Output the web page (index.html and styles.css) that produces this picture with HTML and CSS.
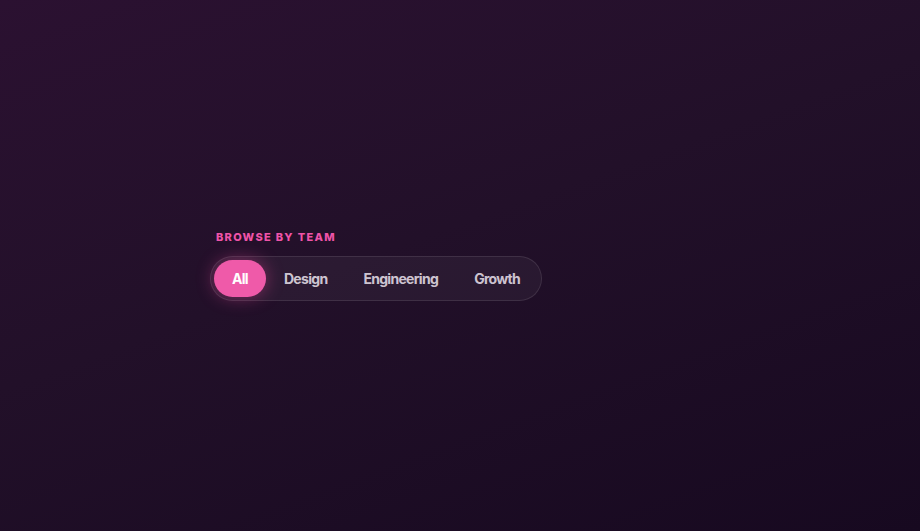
FILE: index.html
```html
<!DOCTYPE html>
<html lang="en">
<head>
<meta charset="utf-8">
<title>Browse by team</title>
<link rel="stylesheet" href="styles.css">
</head>
<body>
<main class="page">
  <section class="filter">
    <div class="filter-label">Browse by team</div>
    <div class="segmented" role="tablist">
      <button class="seg seg-active" role="tab">All</button>
      <button class="seg" role="tab">Design</button>
      <button class="seg" role="tab">Engineering</button>
      <button class="seg" role="tab">Growth</button>
    </div>
  </section>
</main>
</body>
</html>
```

FILE: styles.css
```css
* { box-sizing: border-box; }
html, body { margin: 0; height: 100%; }
body {
  background: linear-gradient(160deg, #2b1131 0%, #221029 45%, #170920 100%);
  font-family: Inter, "Noto Sans", "Liberation Sans", sans-serif;
}
.page {
  min-height: 100%;
  padding: 225px 0 0 210px;
}
.filter {
  display: inline-flex;
  flex-direction: column;
  align-items: flex-start;
}
.filter-label {
  margin: 0 0 12px 6px;
  font-size: 11px;
  line-height: 14px;
  font-weight: 800;
  letter-spacing: 1.3px;
  text-transform: uppercase;
  color: #ef53a8;
}
.segmented {
  display: flex;
  align-items: center;
  padding: 3px;
  border: 1px solid rgba(255, 255, 255, 0.1);
  border-radius: 999px;
  background: rgba(255, 255, 255, 0.045);
}
.seg {
  height: 37px;
  padding: 0 18px;
  border: 0;
  border-radius: 999px;
  background: transparent;
  font-family: inherit;
  font-size: 14px;
  font-weight: 650;
  letter-spacing: -0.7px;
  color: rgba(242, 234, 244, 0.84);
  cursor: pointer;
}
.seg-active {
  background: #ef5aa9;
  color: #fff;
  font-weight: 700;
  box-shadow: 0 0 18px rgba(236, 72, 153, 0.45);
}
```
